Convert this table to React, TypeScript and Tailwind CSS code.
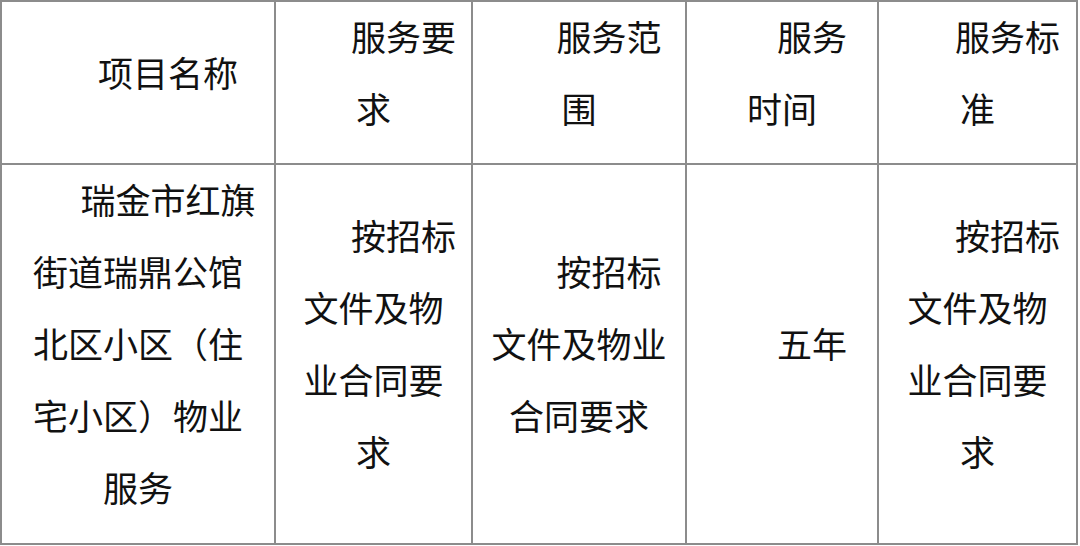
const header: string[][] = [
  ["项目名称"],
  ["服务要", "求"],
  ["服务范", "围"],
  ["服务", "时间"],
  ["服务标", "准"],
];

const body: string[][] = [
  ["瑞金市红旗", "街道瑞鼎公馆", "北区小区（住", "宅小区）物业", "服务"],
  ["按招标", "文件及物", "业合同要", "求"],
  ["按招标", "文件及物业", "合同要求"],
  ["五年"],
  ["按招标", "文件及物", "业合同要", "求"],
];

function Cell({ lines }: { lines: string[] }) {
  return (
    <div className="bg-white flex items-center pb-[22px]">
      <p className="w-full text-center indent-[60px] text-[35px] leading-[72px] text-[#111]">
        {lines.map((l, i) => (
          <span key={i}>
            {i > 0 && <br />}
            {l}
          </span>
        ))}
      </p>
    </div>
  );
}

export default function App() {
  return (
    <div
      className="w-[1080px] h-[546px] bg-white"
      style={{ fontFamily: '"Noto Sans CJK SC", sans-serif' }}
    >
      <div className="w-[1078px] grid grid-cols-[272px_195px_212px_190px_197px] grid-rows-[161px_378px] gap-[2px] p-[2px] bg-[#8c8c8c]">
        {header.map((lines, i) => (
          <Cell key={"h" + i} lines={lines} />
        ))}
        {body.map((lines, i) => (
          <Cell key={"b" + i} lines={lines} />
        ))}
      </div>
    </div>
  );
}
